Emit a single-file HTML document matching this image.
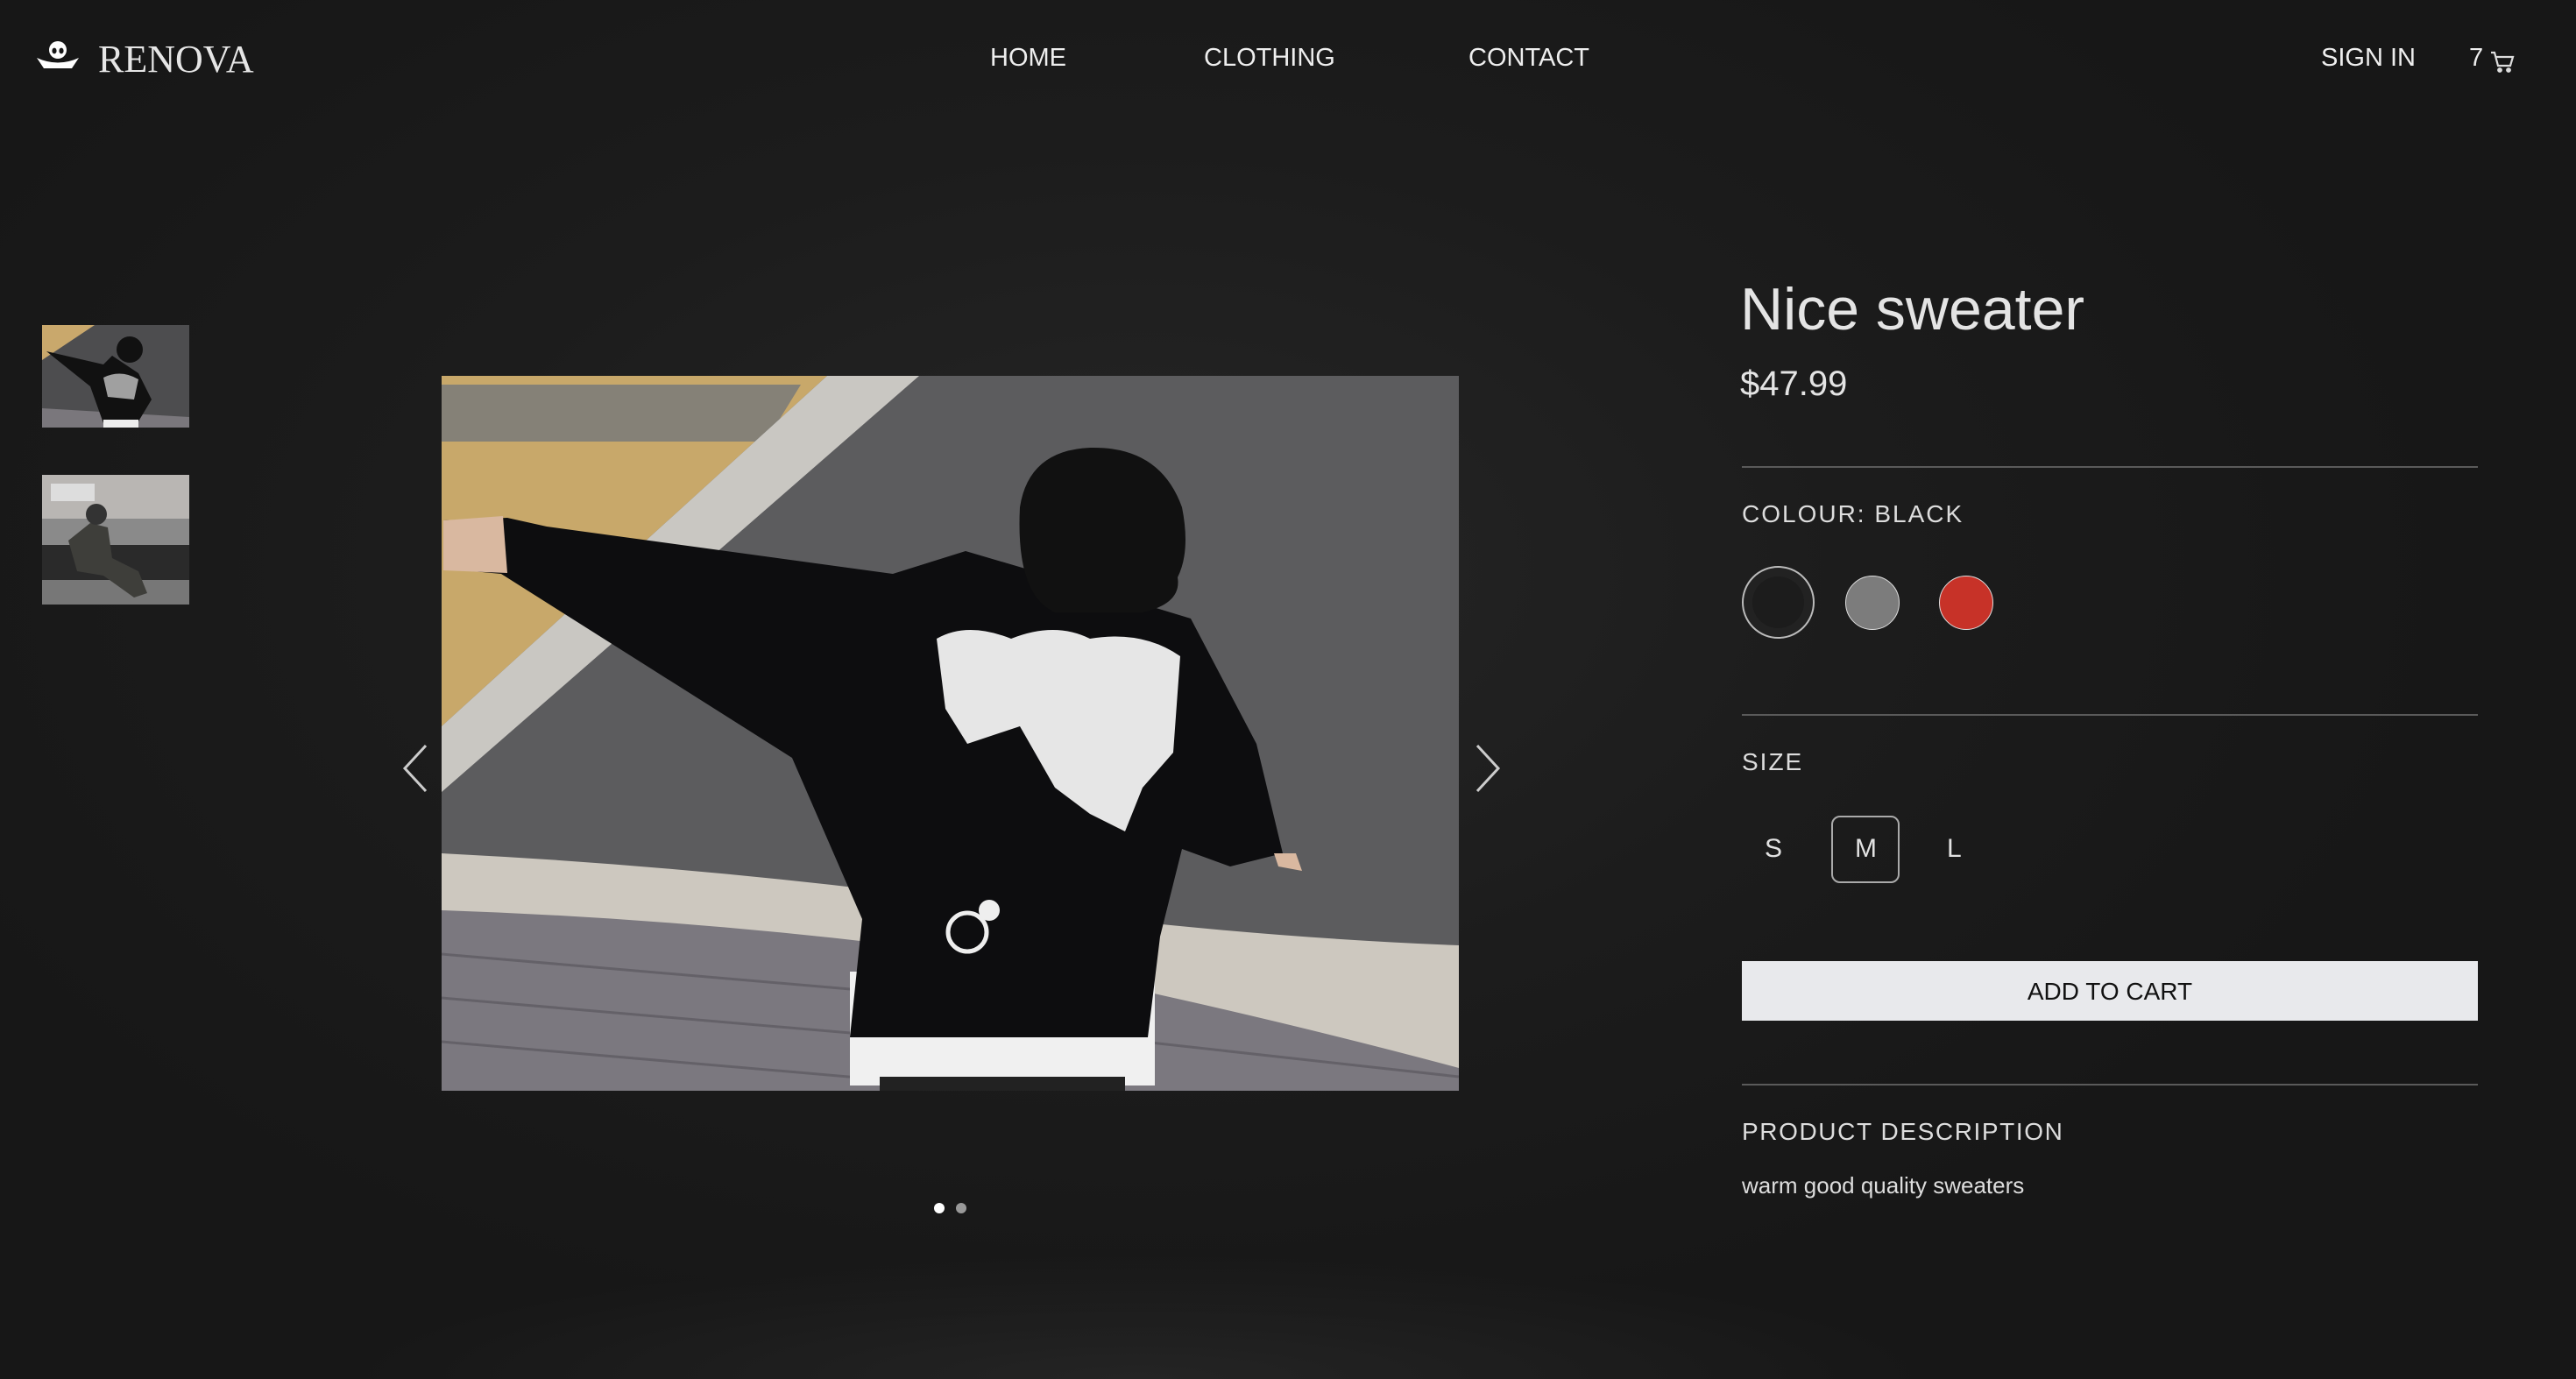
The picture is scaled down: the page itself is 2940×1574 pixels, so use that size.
<!DOCTYPE html>
<html><head><meta charset="utf-8">
<style>
*{margin:0;padding:0;box-sizing:border-box}
html,body{width:2940px;height:1574px;overflow:hidden}
body{background:radial-gradient(ellipse 1500px 900px at 1300px 650px,#262626 0%,#1c1c1c 55%,#171717 100%);font-family:"Liberation Sans","DejaVu Sans",sans-serif;color:#e2e2e2;position:relative}
.a{position:absolute;white-space:nowrap}
.nav{font-size:29px;color:#eee;top:50px}
.hr{position:absolute;left:1988px;width:840px;height:2px;background:#5a5a5a}
.lbl{font-size:28px;letter-spacing:2px;color:#ddd}
</style></head><body>
<div style="position:absolute;left:0;right:0;bottom:0;height:200px;background:radial-gradient(ellipse 900px 140px at 1300px 200px,#242424,transparent)"></div>
<svg class="a" style="left:40px;top:44px" width="52" height="40" viewBox="0 0 52 40">
<circle cx="26" cy="13" r="10" fill="#fff"/><ellipse cx="22" cy="14" rx="2.6" ry="3.4" fill="#181818"/><ellipse cx="30" cy="14" rx="2.6" ry="3.4" fill="#181818"/>
<path d="M2 22 Q26 33 50 22 L42 34 L10 34 Z" fill="#fff"/></svg>
<div class="a" style="left:112px;top:42px;font-family:'Liberation Serif',serif;font-size:44px;color:#e6e6e6;letter-spacing:0px">RENOVA</div>
<div class="a nav" style="left:1130px">HOME</div>
<div class="a nav" style="left:1374px">CLOTHING</div>
<div class="a nav" style="left:1676px">CONTACT</div>
<div class="a nav" style="left:2649px">SIGN IN</div>
<div class="a nav" style="left:2818px">7</div>
<svg class="a" style="left:2842px;top:58px" width="28" height="26" viewBox="0 0 28 26" fill="none" stroke="#ddd" stroke-width="2.2"><path d="M1 2 H5 L9 17 H23 L26 7 H7"/><circle cx="11" cy="22" r="1.8" fill="#ddd"/><circle cx="21" cy="22" r="1.8" fill="#ddd"/></svg>

<svg class="a" style="left:48px;top:371px" width="168" height="117" viewBox="0 0 168 117" preserveAspectRatio="none">
<rect width="168" height="117" fill="#4d4d4f"/><polygon points="0,0 60,0 0,40" fill="#c9a86c"/><polygon points="0,95 168,105 168,117 0,117" fill="#7a777c"/>
<path d="M5 30 L70 45 L80 35 L110 55 L125 85 L110 110 L70 112 L55 70 Z" fill="#111"/><circle cx="100" cy="28" r="15" fill="#111"/><rect x="70" y="108" width="40" height="9" fill="#eee"/><path d="M70 60 Q90 50 110 62 L105 85 L75 82Z" fill="#ddd" opacity=".7"/></svg>
<svg class="a" style="left:48px;top:542px" width="168" height="148" viewBox="0 0 168 148" preserveAspectRatio="none">
<rect width="168" height="148" fill="#8a8a8a"/><rect width="168" height="50" fill="#b9b6b3"/><rect x="10" y="10" width="50" height="20" fill="#ddd"/><rect x="0" y="80" width="168" height="40" fill="#2a2a2a"/><rect x="0" y="120" width="168" height="28" fill="#777"/>
<path d="M30 75 L55 55 L75 60 L80 95 L110 110 L120 135 L105 140 L70 115 L40 110 Z" fill="#3e3e3a"/><circle cx="62" cy="45" r="12" fill="#333"/></svg>

<svg class="a" style="left:504px;top:429px" width="1161" height="816" viewBox="0 0 1161 816">
<rect width="1161" height="816" fill="#5c5c5e"/>
<polygon points="0,0 440,0 0,400" fill="#c8a86a"/>
<polygon points="0,10 410,10 370,75 0,75" fill="#6f747c" opacity=".75"/>
<polygon points="440,0 545,0 0,475 0,400" fill="#c9c7c2"/>
<path d="M0 545 Q300 560 600 600 Q900 640 1161 650 L1161 816 L0 816Z" fill="#cdc8bf"/>
<path d="M0 610 Q300 620 600 660 Q900 720 1161 790 L1161 816 L0 816Z" fill="#7b787f"/>
<g stroke="#5b585f" stroke-width="3" opacity=".7"><path d="M0 660 L700 720 M0 710 L700 770 M0 760 L650 816 M800 760 L1161 800"/></g>
<rect x="466" y="680" width="348" height="130" fill="#f0f0f0"/>
<rect x="500" y="800" width="280" height="16" fill="#222"/>
<path d="M2 165 L75 162 L120 172 L515 226 L598 200 L700 230 L855 277 L930 420 L960 545 L900 560 L845 540 L820 640 L806 755 L466 755 L480 620 L400 436 L68 226 L2 220Z" fill="#0d0d0f"/>
<path d="M2 165 L70 160 L75 225 L2 222Z" fill="#d9b8a0"/>
<path d="M950 545 L975 545 L982 565 L955 560Z" fill="#d9b8a0"/>
<path d="M660 150 Q670 85 740 82 Q820 80 845 150 Q855 200 840 230 Q845 260 800 270 L700 270 Q655 250 660 150Z" fill="#111"/>
<path d="M565 300 Q600 280 650 300 Q700 280 740 300 Q800 290 843 320 L835 430 L800 470 L780 520 L740 500 L700 470 L660 400 L600 420 L575 380Z" fill="#e6e6e6"/>
<circle cx="600" cy="635" r="22" fill="none" stroke="#eee" stroke-width="5"/><circle cx="625" cy="610" r="12" fill="#eee"/>
</svg>
<svg class="a" style="left:456px;top:848px" width="36" height="58" viewBox="0 0 36 58" fill="none" stroke="#ccc" stroke-width="3"><path d="M30 3 L6 29 L30 55"/></svg>
<svg class="a" style="left:1680px;top:848px" width="36" height="58" viewBox="0 0 36 58" fill="none" stroke="#ccc" stroke-width="3"><path d="M6 3 L30 29 L6 55"/></svg>
<div class="a" style="left:1066px;top:1373px;width:12px;height:12px;border-radius:50%;background:#fff"></div>
<div class="a" style="left:1091px;top:1373px;width:12px;height:12px;border-radius:50%;background:#999"></div>

<div class="a" style="left:1986px;top:314px;font-size:68px;color:#e4e4e4">Nice sweater</div>
<div class="a" style="left:1986px;top:416px;font-size:40px;color:#e4e4e4">$47.99</div>
<div class="hr" style="top:532px"></div>
<div class="a lbl" style="left:1988px;top:571px">COLOUR: BLACK</div>
<div class="a" style="left:1988px;top:646px;width:83px;height:83px;border-radius:50%;border:2px solid #bbb;background:#1c1c1c;box-shadow:inset 0 0 0 10px #222"></div>
<div class="a" style="left:2106px;top:657px;width:62px;height:62px;border-radius:50%;background:#7c7c7c;border:1px solid #ddd"></div>
<div class="a" style="left:2213px;top:657px;width:62px;height:62px;border-radius:50%;background:#c73228;border:1px solid #ddd"></div>
<div class="hr" style="top:815px"></div>
<div class="a lbl" style="left:1988px;top:854px">SIZE</div>
<div class="a" style="left:2014px;top:952px;font-size:30px">S</div>
<div class="a" style="left:2090px;top:931px;width:78px;height:77px;border:2px solid #aaa;border-radius:10px"></div>
<div class="a" style="left:2117px;top:952px;font-size:30px">M</div>
<div class="a" style="left:2222px;top:952px;font-size:30px">L</div>
<div class="a" style="left:1988px;top:1097px;width:840px;height:68px;background:#e8e9ec;color:#111;font-size:28px;text-align:center;line-height:70px">ADD TO CART</div>
<div class="hr" style="top:1237px"></div>
<div class="a lbl" style="left:1988px;top:1276px;letter-spacing:1.6px">PRODUCT DESCRIPTION</div>
<div class="a" style="left:1988px;top:1338px;font-size:26px;color:#ddd">warm good quality sweaters</div>
</body></html>
